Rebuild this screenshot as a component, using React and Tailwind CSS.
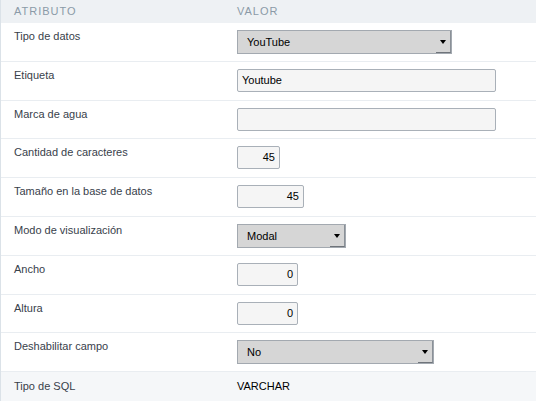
import React from "react";

const font = { fontFamily: '"Liberation Sans", Arial, sans-serif' };

function Arrow() {
  return (
    <div className="flex h-full w-[15px] items-center justify-center border-b border-r border-b-[#6f747a] border-r-[#8a9097]">
      <div className="h-0 w-0 border-l-[3px] border-r-[3px] border-t-[4px] border-l-transparent border-r-transparent border-t-black" />
    </div>
  );
}

function Select({ value, w }) {
  return (
    <div
      className={`flex h-[24px] items-center border border-[#a3a9b0] bg-[#d6d6d6] pl-[9px] text-[11px] text-black ${w}`}
    >
      <span className="flex-1">{value}</span>
      <Arrow />
    </div>
  );
}

function Input({ value, w, right }) {
  return (
    <div
      className={`flex h-[23px] items-center rounded-[2px] border border-[#a9b0b8] bg-[#f5f5f5] px-[4px] text-[11px] text-black ${w} ${right ? "justify-end" : ""}`}
    >
      {value}
    </div>
  );
}

const rows = [
  { label: "Tipo de datos", h: "h-[39px]", el: <Select value="YouTube" w="w-[215px]" /> },
  { label: "Etiqueta", h: "h-[39px]", el: <Input value="Youtube" w="w-[259px]" /> },
  { label: "Marca de agua", h: "h-[38px]", el: <Input value="" w="w-[259px]" /> },
  { label: "Cantidad de caracteres", h: "h-[39px]", el: <Input value="45" w="w-[43px]" right /> },
  { label: "Tamaño en la base de datos", h: "h-[39px]", el: <Input value="45" w="w-[67px]" right /> },
  { label: "Modo de visualización", h: "h-[39px]", el: <Select value="Modal" w="w-[109px]" /> },
  { label: "Ancho", h: "h-[39px]", el: <Input value="0" w="w-[61px]" right /> },
  { label: "Altura", h: "h-[38px]", el: <Input value="0" w="w-[61px]" right /> },
  { label: "Deshabilitar campo", h: "h-[39px]", el: <Select value="No" w="w-[197px]" /> },
];

export default function App() {
  return (
    <div className="h-[401px] w-[536px] overflow-hidden bg-white" style={font}>
      <div className="border-l border-[#dbe2e8]">
        <div className="grid h-[23px] grid-cols-[236px_1fr] items-center bg-[#eef1f4] text-[11px] uppercase tracking-[1px] text-[#8b9aa7]">
          <div className="pl-[13px]">Atributo</div>
          <div>Valor</div>
        </div>
        {rows.map((r) => (
          <div
            key={r.label}
            className={`grid grid-cols-[236px_1fr] border-b border-[#e9edf1] ${r.h}`}
          >
            <div className="pl-[13px] pt-[6px] text-[11px] leading-[14px] text-[#38414b]">
              {r.label}
            </div>
            <div className="pt-[7px]">{r.el}</div>
          </div>
        ))}
        <div className="grid h-[40px] grid-cols-[236px_1fr] bg-[#f5f7f9]">
          <div className="pl-[13px] pt-[7px] text-[11px] leading-[14px] text-[#38414b]">
            Tipo de SQL
          </div>
          <div className="pt-[7px] text-[11px] leading-[14px] text-black">VARCHAR</div>
        </div>
      </div>
    </div>
  );
}
